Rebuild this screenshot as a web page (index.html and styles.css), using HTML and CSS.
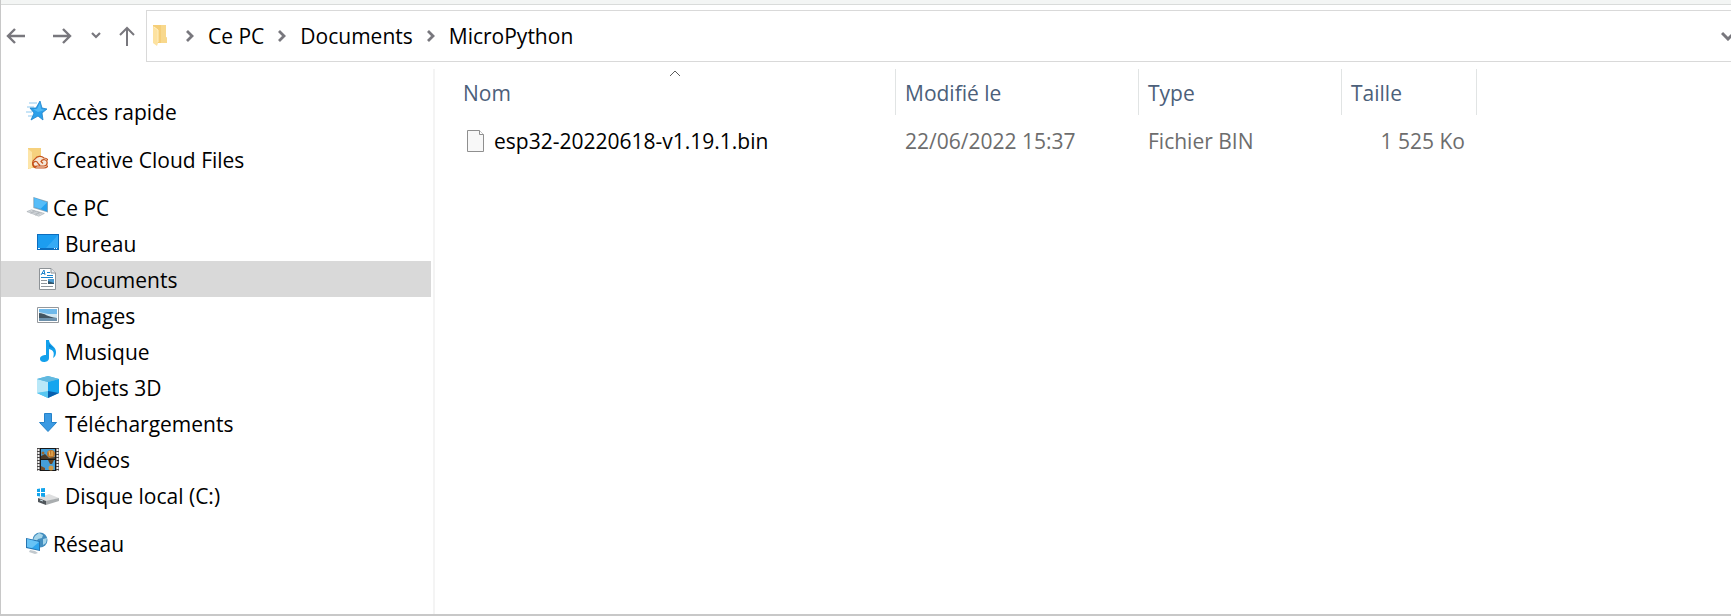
FILE: index.html
```html
<!DOCTYPE html>
<html lang="fr">
<head>
    <meta charset="UTF-8">
    <meta name="viewport" content="width=device-width, initial-scale=1.0">
    <title>MicroPython</title>
    <link rel="stylesheet" href="styles.css">
</head>
<body>
    <div class="ribbon"></div>

    <header class="toolbar">
        <div class="nav-buttons">
            <button type="button" class="nav-button" aria-label="Précédent">
                <svg width="20" height="18" viewBox="0 0 20 18"><path d="M9 2 2 9l7 7M2 9h17" fill="none" stroke="#78777d" stroke-width="2.4"/></svg>
            </button>
            <button type="button" class="nav-button nav-forward" aria-label="Suivant">
                <svg width="20" height="18" viewBox="0 0 20 18"><path d="m11 2 7 7-7 7M18 9H1" fill="none" stroke="#78777d" stroke-width="2.4"/></svg>
            </button>
            <button type="button" class="nav-button nav-recent" aria-label="Emplacements récents">
                <svg width="10" height="8" viewBox="0 0 10 8"><path d="m1 1 4 4 4-4" fill="none" stroke="#78777d" stroke-width="2.2"/></svg>
            </button>
            <button type="button" class="nav-button nav-up" aria-label="Dossier parent">
                <svg width="16" height="20" viewBox="0 0 16 20"><path d="M1 9l7-7 7 7M8 2v18" fill="none" stroke="#78777d" stroke-width="2"/></svg>
            </button>
        </div>
        <nav class="address">
            <svg class="address-folder" width="14" height="22" viewBox="0 0 14 22">
                <path d="M0 0h13v12l1 1v5H0z" fill="#f5ce78"/>
                <path d="M8 0h5v12l1 1v5H8z" fill="#f8d88c"/>
                <path d="M0 1l5 4v13l-1 3-4-3z" fill="#fde2a0"/>
                <path d="M1 2l4 3v12" fill="none" stroke="#fff0c4"/>
            </svg>
            <svg class="crumb-arrow" width="8" height="12" viewBox="0 0 8 12"><path d="m1 1 5 5-5 5" fill="none" stroke="#78777d" stroke-width="2.8"/></svg>
            <a href="#">Ce PC</a>
            <svg class="crumb-arrow" width="8" height="12" viewBox="0 0 8 12"><path d="m1 1 5 5-5 5" fill="none" stroke="#78777d" stroke-width="2.8"/></svg>
            <a href="#">Documents</a>
            <svg class="crumb-arrow" width="8" height="12" viewBox="0 0 8 12"><path d="m1 1 5 5-5 5" fill="none" stroke="#78777d" stroke-width="2.8"/></svg>
            <a href="#">MicroPython</a>
            <button type="button" class="nav-button address-more" aria-label="Historique">
                <svg width="14" height="10" viewBox="0 0 14 10"><path d="m1 2 6 6 6-6" fill="none" stroke="#78777d" stroke-width="3"/></svg>
            </button>
        </nav>
    </header>

    <div class="content">
        <aside class="sidebar">
            <ul class="tree">
                <li>
                    <a href="#" class="item">
                        <svg width="22" height="22" viewBox="0 0 22 22">
                            <path d="M3 3h8M1 7h7M0 12h6M2 16h4" stroke="#8fc9f0" stroke-width="1.2"/>
                            <path d="m14 1 2 7 5 1-5 4 1 7-5-4-7 4 3-7-4-5 6 0z" fill="#2a9fea" stroke="#1d83cc" stroke-width=".8"/>
                            <path d="m14 3 1 6 4 1-7 2-5-3 4 0z" fill="#50b9f6"/>
                        </svg>
                        Accès rapide
                    </a>
                </li>
                <li class="group">
                    <a href="#" class="item">
                        <svg width="22" height="22" viewBox="0 0 22 22">
                            <path d="M2 0h13v20H5l-3 1z" fill="#f6d17e"/>
                            <path d="M2 1l4 3v14l-1 3-3-1z" fill="#fde5a8"/>
                            <path d="M10 20a5 5 0 0 1-1-9 6 6 0 0 1 9-1 5 5 0 0 1 0 10z" fill="#f6e7d8" stroke="#c5531c" stroke-width="1.2"/>
                            <path d="M14 17.500l-2-2a2.500 2.500 0 1 0-1 2.500h7a3.200 3.200 0 1 0-3-4.500l2 2" fill="none" stroke="#c5531c" stroke-width="1.2"/>
                        </svg>
                        Creative Cloud Files
                    </a>
                </li>
                <li class="group">
                    <a href="#" class="item">
                        <svg width="22" height="22" viewBox="0 0 24 22">
                            <path d="m8 0 16 5v12L8 12z" fill="#8aa7ba"/>
                            <path d="m9 1 14 5v10L9 11z" fill="#25a0ee"/>
                            <path d="m9 1 14 5-7 7-7-2z" fill="#57bdf8"/>
                            <path d="m1 16 5-2 14 4-6 3z" fill="#dce0e3" stroke="#a5abb0" stroke-width=".7"/>
                            <path d="m4 16 11 3M7 15l10 3M5 18l4-3m1 5 5-3" stroke="#a5abb0" stroke-width=".7"/>
                        </svg>
                        Ce PC
                    </a>
                    <ul class="tree-children">
                        <li>
                            <a href="#" class="item">
                                <svg width="22" height="22" viewBox="0 0 22 22">
                                    <path d="M0 2h22v16H0z" fill="#0d6dbe"/>
                                    <path d="M1 3h20v13H1z" fill="#1c9df0"/>
                                    <path d="M21 3v13H9z" fill="#36aaf5"/>
                                    <path d="M1 16.500h2m14 0h1m1 0h1" stroke="#e8f5ff"/>
                                </svg>
                                Bureau
                            </a>
                        </li>
                        <li>
                            <a href="#" class="item selected">
                                <svg width="22" height="22" viewBox="0 0 22 22">
                                    <path d="M2.500.5H14L18.500 5v16.500h-16z" fill="#fff" stroke="#8d9296"/>
                                    <path d="M14 .5V5h4.500" fill="#e7eaec" stroke="#8d9296"/>
                                    <path d="m4 7 3-5 1 5M5 5.500h3M10 4.500h3M10 7.500h6M4 9.500h12" fill="none" stroke="#1b83cc"/>
                                    <path d="M4 12.500h6M4 15.500h6M4 18.500h12" stroke="#8f969c"/>
                                    <path d="M11 11h6v5h-6z" fill="#4a9ad0"/>
                                    <path d="M11 13l6 2v1h-6z" fill="#335469"/>
                                </svg>
                                Documents
                            </a>
                        </li>
                        <li>
                            <a href="#" class="item">
                                <svg width="22" height="22" viewBox="0 0 22 22">
                                    <path d="M.5 3.500h21v15H.5z" fill="#fff" stroke="#94989c"/>
                                    <path d="M2 5h18v12H2z" fill="#6fb9ea"/>
                                    <path d="M2 8l9 2h9v4H2z" fill="#cfe6f2"/>
                                    <path d="M2 9c6 0 8 4 18 5H2z" fill="#435562"/>
                                    <path d="M2 14h18v3H2z" fill="#6d91ac"/>
                                </svg>
                                Images
                            </a>
                        </li>
                        <li>
                            <a href="#" class="item">
                                <svg width="22" height="22" viewBox="0 0 22 22">
                                    <path d="M9 0h3c0 5 7 6 7 12 0 3-1 5-3 6 2-6 0-8-4-9v9c0 3-3 4-5 4-3 0-4-2-4-3 0-3 3-4 6-4z" fill="#12a0ec"/>
                                    <path d="M12 4c1 2 4 3 5 5-1-1-3-2-5-2z" fill="#0b80ce"/>
                                </svg>
                                Musique
                            </a>
                        </li>
                        <li>
                            <a href="#" class="item">
                                <svg width="22" height="22" viewBox="0 0 22 22">
                                    <path d="m0 3 11-3 11 3v14l-11 5-11-5z" fill="#4fb8ea"/>
                                    <path d="m0 3 11 3v10L0 17z" fill="#b9e8f8"/>
                                    <path d="m11 6 11-3v14l-11-1z" fill="#16a5ef"/>
                                    <path d="m0 3 11-3 11 3-11 3z" fill="#62b9df"/>
                                    <path d="m0 17 11-2v7z" fill="#58c7f1"/>
                                    <path d="m11 15 11 2-11 5z" fill="#075fae"/>
                                </svg>
                                Objets 3D
                            </a>
                        </li>
                        <li>
                            <a href="#" class="item">
                                <svg width="22" height="22" viewBox="0 0 22 22">
                                    <path d="M7.500 1.500h7v9h5L11 19.500l-8.500-9h5z" fill="#3b9ae2" stroke="#2482ca"/>
                                </svg>
                                Téléchargements
                            </a>
                        </li>
                        <li>
                            <a href="#" class="item">
                                <svg width="22" height="23" viewBox="0 0 22 23">
                                    <path d="M0 0h22v23H0z" fill="#4a4747"/>
                                    <path d="M1.500 1v22M20.500 1v22" stroke="#f0f0f0" stroke-width="2" stroke-dasharray="2 1"/>
                                    <path d="M3 0h16v23H3z" fill="#171717"/>
                                    <path d="M4 1h14v10H4zM4 12h14v10H4z" fill="#459fd8"/>
                                    <circle cx="14" cy="6" r="4" fill="#bd762b"/>
                                    <path d="M12 3l1 5m2-5v5" stroke="#f1c367"/>
                                    <path d="M4 8l4-2 4 4 6-1v2H4z" fill="#4b3a26"/>
                                    <circle cx="6" cy="5" r="1.500" fill="#9b672e"/>
                                    <path d="M11 12h6l-2 4h-2z" fill="#684420"/>
                                    <circle cx="14" cy="20" r="2.500" fill="#d09a47"/>
                                    <path d="M4 18l4 2v2H4z" fill="#78502a"/>
                                </svg>
                                Vidéos
                            </a>
                        </li>
                        <li>
                            <a href="#" class="item">
                                <svg width="22" height="22" viewBox="0 0 22 22">
                                    <path d="m1 14 11-4 10 4-14 4z" fill="#dedfe0"/>
                                    <path d="m1 14 8 3v4l-8-3z" fill="#50565b"/>
                                    <path d="m9 17 13-3v3L9 21z" fill="#a9adaf"/>
                                    <path d="m3 16 3 1" stroke="#c7dde7"/>
                                    <path d="M0 5l3-.5V8H0zM4 4.300 8 4v4H4zM0 9h3v3.500L0 12zM4 9h4v4l-4-.5z" fill="#12a4ec"/>
                                </svg>
                                Disque local (C:)
                            </a>
                        </li>
                    </ul>
                </li>
                <li class="group">
                    <a href="#" class="item">
                        <svg width="22" height="22" viewBox="0 0 22 22">
                            <circle cx="14" cy="8" r="7.500" fill="#438ebf"/>
                            <path d="m9 4 4-3 4 2-1 3-4 1-2 3-3-2zM17 7l4-1-1 5-3 2z" fill="#a5d5ea"/>
                            <path d="m0 6 14 3v10L0 16z" fill="#2674b0"/>
                            <path d="m1 7 12 3v8L1 15z" fill="#2ea5ee"/>
                            <path d="m1 7 12 3-7 6-5-1z" fill="#68c3f5"/>
                            <path d="m4 18 5 1 3 2-3 1-6-2z" fill="#c2c9ce"/>
                        </svg>
                        Réseau
                    </a>
                </li>
            </ul>
        </aside>

        <main class="files">
            <table class="file-table">
                <colgroup>
                    <col class="col-name">
                    <col class="col-date">
                    <col class="col-type">
                    <col class="col-size">
                </colgroup>
                <thead>
                    <tr>
                        <th class="sorted" aria-sort="ascending">
                            Nom
                            <svg class="sort-arrow" width="12" height="7" viewBox="0 0 12 7"><path d="m1 6 5-5 5 5" fill="none" stroke="#5c5c5c"/></svg>
                        </th>
                        <th>Modifié le</th>
                        <th>Type</th>
                        <th>Taille</th>
                    </tr>
                </thead>
                <tbody>
                    <tr>
                        <td>
                            <a href="#" class="file-name">
                                <svg width="18" height="22" viewBox="0 0 18 22">
                                    <path d="M.5.500h12l4 4v17H.5z" fill="#f8f8f8" stroke="#8f8f8f"/>
                                    <path d="M12.500.5v4h4" fill="#fff" stroke="#8f8f8f"/>
                                </svg>
                                esp32-20220618-v1.19.1.bin
                            </a>
                        </td>
                        <td>22/06/2022 15:37</td>
                        <td>Fichier BIN</td>
                        <td class="size">1 525 Ko</td>
                    </tr>
                </tbody>
            </table>
        </main>
    </div>
</body>
</html>
```
FILE: styles.css
```css
* {
    box-sizing: border-box;
}
body {
    display: flex;
    flex-direction: column;
    min-height: 100vh;
    margin: 0;
    border-left: 1px solid #c8c8c8;
    border-bottom: 2px solid #c8c8c8;
    background: #fff;
    color: #000;
    font-family: "Segoe UI", "Open Sans", "Noto Sans", sans-serif;
    font-size: 21px;
    line-height: 36px;
    overflow-x: hidden;
}
a {
    color: inherit;
    text-decoration: none;
}
ul {
    list-style: none;
    margin: 0;
    padding: 0;
}
svg {
    display: block;
    flex-shrink: 0;
}
.ribbon {
    height: 5px;
    background: #f3f5f4;
    border-bottom: 1px solid #d9dbda;
}
.toolbar {
    display: flex;
    margin-top: 5px;
}
.nav-buttons {
    display: flex;
    align-items: center;
    width: 145px;
    padding-left: 5px;
}
.nav-button {
    padding: 0;
    border: 0;
    background: none;
}
.nav-forward {
    margin-left: 26px;
}
.nav-recent {
    margin-left: 19px;
}
.nav-up {
    margin-left: 18px;
}
.address {
    display: flex;
    flex: 1;
    align-items: center;
    gap: 14px;
    height: 52px;
    padding-left: 6px;
    border: 1px solid #d9d9d9;
    border-right: 0;
    overflow: hidden;
}
.address-folder {
    margin-right: 5px;
}
.address-more {
    margin-left: auto;
    margin-right: -4px;
}
.content {
    display: flex;
    flex: 1;
    padding-top: 7px;
}
.sidebar {
    width: 434px;
    padding: 24px 2px 24px 0;
    border-right: 2px solid #f4f4f4;
}
.group {
    margin-top: 12px;
}
.item {
    display: flex;
    align-items: center;
    gap: 5px;
    height: 36px;
    padding-top: 2px;
    padding-left: 25px;
}
.item svg {
    margin-bottom: 2px;
}
.tree-children .item {
    gap: 6px;
    padding-left: 36px;
}
.item:hover {
    background: #e5f3ff;
}
.item.selected {
    background: #d9d9d9;
}
.files {
    flex: 1;
    padding-left: 19px;
}
.file-table {
    width: 1023px;
    table-layout: fixed;
    border-collapse: separate;
    border-spacing: 0;
}
.col-name {
    width: 442px;
}
.col-date {
    width: 243px;
}
.col-type {
    width: 203px;
}
.col-size {
    width: 135px;
}
th {
    height: 46px;
    padding: 2px 9px 0;
    border-right: 1px solid #e1e4e4;
    color: #4c607a;
    font-weight: normal;
    text-align: left;
}
.sorted {
    position: relative;
}
.sort-arrow {
    position: absolute;
    top: 1px;
    left: 50%;
    margin-left: -6px;
}
td {
    padding: 8px 9px 0;
    color: #6d6d6d;
}
.file-name {
    display: flex;
    align-items: center;
    gap: 9px;
    padding-left: 4px;
    color: #000;
}
.size {
    padding-right: 12px;
    text-align: right;
}
```
